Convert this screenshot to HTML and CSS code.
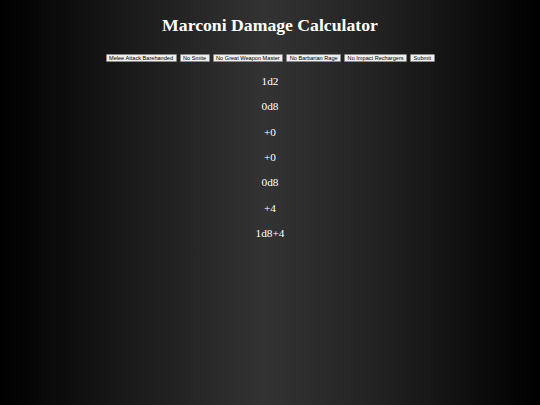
FILE: index.html
```html
<!DOCTYPE html>
<html>
<head>
<meta charset="utf-8">
<link rel="stylesheet" href="styles.css">
</head>
<body>
<h1 class="title">Marconi Damage Calculator</h1>
<div class="controls">
  <button class="btn">Melee Attack Barehanded</button>
  <button class="btn">No Smite</button>
  <button class="btn">No Great Weapon Master</button>
  <button class="btn">No Barbarian Rage</button>
  <button class="btn">No Impact Rechargers</button>
  <button class="btn">Submit</button>
</div>
<div class="results">
  <p class="result">1d2</p>
  <p class="result">0d8</p>
  <p class="result">+0</p>
  <p class="result">+0</p>
  <p class="result">0d8</p>
  <p class="result">+4</p>
  <p class="result">1d8+4</p>
</div>
</body>
</html>
```
FILE: styles.css
```css
html, body {
  margin: 0;
  padding: 0;
  height: 100%;
}
body {
  background: linear-gradient(to right, #000 0%, #1b1b1b 25%, #333 49%, #222 70%, #000 100%);
  color: #fff;
  font-family: "Liberation Serif", "Times New Roman", serif;
  text-align: center;
}
.title {
  margin: 0;
  padding-top: 14px;
  font-size: 17.7px;
  line-height: 22px;
  font-weight: bold;
}
.controls {
  display: flex;
  justify-content: center;
  gap: 3px;
  margin-top: 18px;
}
.btn {
  font-family: "Liberation Sans", Arial, sans-serif;
  font-size: 5.6px;
  line-height: 6px;
  padding: 0 2.5px;
  margin: 0;
  height: 8px;
  background: #efefef;
  color: #000;
  border: 1px solid #8a8a8a;
  border-radius: 1px;
}
.results {
  margin-top: 7px;
}
.result {
  margin: 0;
  font-size: 11.3px;
  line-height: 25.33px;
}
```
